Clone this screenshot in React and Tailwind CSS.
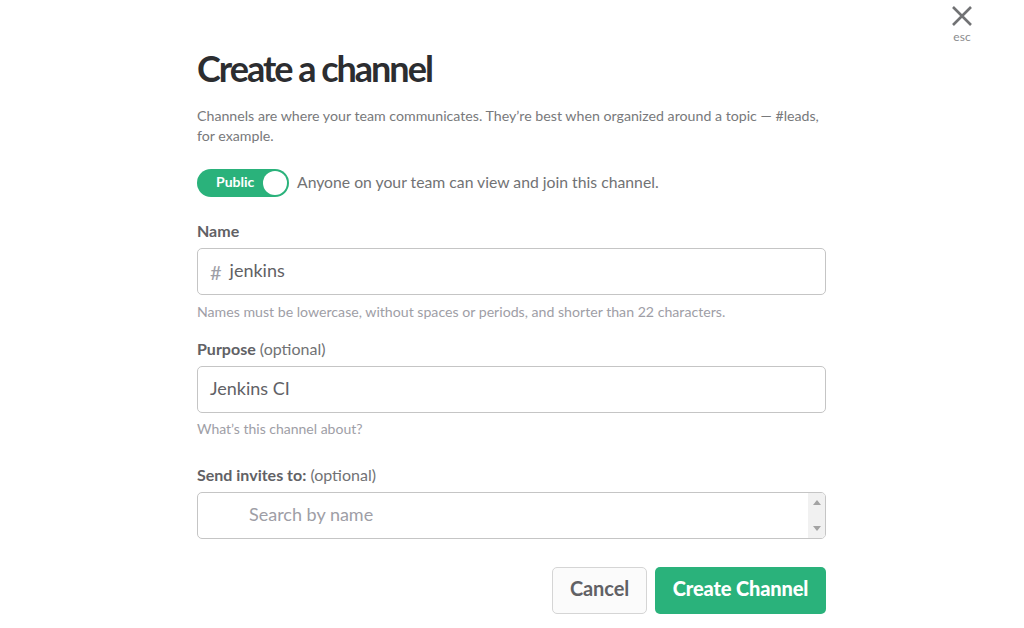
import React from 'react';

const field = "w-full h-[47px] border border-[#c5c5c5] rounded-[5px] bg-white flex items-center";

export default function App() {
  return (
    <div className="relative w-[1024px] h-[628px] overflow-hidden bg-white text-[#616165] font-['Lato',sans-serif]">
      <div className="absolute right-[50px] top-[4px] flex flex-col items-center text-[#717274]">
        <svg width="24" height="24" viewBox="0 0 24 24" stroke="currentColor" strokeWidth="2.6" fill="none">
          <path d="M3 3 L21 21 M21 3 L3 21" />
        </svg>
        <span className="text-[12px] leading-[14px] mt-[2px] text-[#8b8c8e]">esc</span>
      </div>

      <div className="w-[629px] ml-[197px] flex flex-col">
        <h1 className="mt-[46px] text-[36px] leading-[45px] font-bold tracking-[-2px] text-[#2c2d30]">Create a channel</h1>
        <p className="mt-[15px] text-[14.2px] leading-[20px] text-[#78797b]">Channels are where your team communicates. They’re best when organized around a topic — #leads, for example.</p>

        <div className="mt-[23px] flex items-center h-[28px]">
          <div className="w-[92px] h-[28px] rounded-full bg-[#2ab27b] relative flex items-center">
            <span className="ml-[19px] pb-[3px] text-[14px] font-bold text-white">Public</span>
            <span className="absolute right-[2px] top-[2px] w-[24px] h-[24px] rounded-full bg-white"></span>
          </div>
          <span className="ml-[8px] pb-[2px] text-[15.75px] text-[#717274]">Anyone on your team can view and join this channel.</span>
        </div>

        <label className="mt-[24px] text-[16px] leading-[20px] font-bold">Name</label>
        <div className={`${field} mt-[7px]`}>
          <span className="ml-[12px] text-[20px] text-[#9e9ea6]">#</span>
          <span className="ml-[8px] pb-[3px] text-[18px] text-[#616165]">jenkins</span>
        </div>
        <p className="mt-[7px] text-[14.15px] leading-[20px] text-[#9e9ea6]">Names must be lowercase, without spaces or periods, and shorter than 22 characters.</p>

        <label className="mt-[17px] text-[16px] leading-[20px]"><b>Purpose</b> <span className="text-[#717274]">(optional)</span></label>
        <div className={`${field} mt-[7px]`}>
          <span className="ml-[12px] pb-[2px] text-[18px]">Jenkins CI</span>
        </div>
        <p className="mt-[6px] text-[14px] leading-[20px] text-[#9e9ea6]">What’s this channel about?</p>

        <label className="mt-[26px] text-[16px] leading-[20px]"><b>Send invites to:</b> <span className="text-[#717274]">(optional)</span></label>
        <div className={`${field} mt-[7px] overflow-hidden relative`}>
          <span className="ml-[51px] pb-[3px] text-[18px] text-[#9e9ea6]">Search by name</span>
          <div className="absolute right-0 top-0 bottom-0 w-[17px] bg-[#f1f1f1] flex flex-col items-center justify-between py-[7px]">
            <span className="w-0 h-0 border-x-[4px] border-x-transparent border-b-[5px] border-b-[#a3a3a3]"></span>
            <span className="w-0 h-0 border-x-[4px] border-x-transparent border-t-[5px] border-t-[#a3a3a3]"></span>
          </div>
        </div>

        <div className="mt-[28px] flex justify-end gap-[8px]">
          <button className="w-[95px] h-[47px] pb-[5px] rounded-[5px] border border-[#d5d5d5] bg-[#fbfbfb] text-[20px] font-bold tracking-[-0.1px] text-[#616165]">Cancel</button>
          <button className="w-[171px] h-[47px] pb-[5px] rounded-[5px] bg-[#2ab27b] text-[20px] font-black tracking-[-0.15px] text-white">Create Channel</button>
        </div>
      </div>
    </div>
  );
}
